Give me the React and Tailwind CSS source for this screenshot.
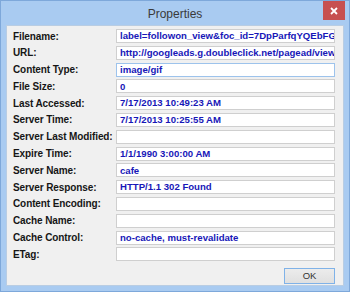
const rows = [
  { label: "Filename:", value: "label=followon_view&foc_id=7DpParfqYQEbFGt!Kz" },
  { label: "URL:", value: "http://googleads.g.doubleclick.net/pagead/viewthroughconversion" },
  { label: "Content Type:", value: "image/gif", focus: true },
  { label: "File Size:", value: "0" },
  { label: "Last Accessed:", value: "7/17/2013 10:49:23 AM" },
  { label: "Server Time:", value: "7/17/2013 10:25:55 AM" },
  { label: "Server Last Modified:", value: "" },
  { label: "Expire Time:", value: "1/1/1990 3:00:00 AM" },
  { label: "Server Name:", value: "cafe" },
  { label: "Server Response:", value: "HTTP/1.1 302 Found" },
  { label: "Content Encoding:", value: "" },
  { label: "Cache Name:", value: "" },
  { label: "Cache Control:", value: "no-cache, must-revalidate" },
  { label: "ETag:", value: "" },
];

export default function App() {
  return (
    <div
      className="w-[350px] h-[292px] bg-[#a9cbf1] border border-[#7ea8da] flex flex-col"
      style={{ fontFamily: '"Liberation Sans", Arial, sans-serif' }}
    >
      {/* Title bar */}
      <div className="relative h-[24px] flex items-center justify-center">
        <span className="text-[12px] text-[#3a3a3a] pt-[1px]">Properties</span>
        <div className="absolute right-[4px] top-0 w-[22px] h-[19px] bg-[#c75050] flex items-center justify-center">
          <svg width="8" height="8" viewBox="0 0 8 8">
            <path d="M1 1 L7 7 M7 1 L1 7" stroke="#ffffff" strokeWidth="1.8" />
          </svg>
        </div>
      </div>

      {/* Client area */}
      <div className="flex-1 mx-[5px] mb-[5px] bg-[#f0f0f0] border border-[#b9cde3] pt-[3px] pl-[6px] pr-[8px] flex flex-col">
        <div className="flex flex-col gap-[2.8px]">
          {rows.map((r) => (
            <div key={r.label} className="flex items-center h-[14px]">
              <div className="w-[103px] shrink-0 text-[10px] font-bold text-[#161616] whitespace-nowrap tracking-[-0.1px]">
                {r.label}
              </div>
              <div
                className={
                  "flex-1 min-w-0 h-[14px] bg-white border overflow-hidden flex items-center pl-[3px] " +
                  (r.focus ? "border-[#9dc3ec]" : "border-[#cfcfcf]")
                }
              >
                <span className="text-[9.6px] font-bold text-[#1717b8] whitespace-nowrap leading-none">
                  {r.value}
                </span>
              </div>
            </div>
          ))}
        </div>

        <div className="flex justify-end mt-[7px]">
          <div className="w-[51px] h-[16px] border border-[#7fb2e8] bg-gradient-to-b from-[#ececec] to-[#e0e0e0] flex items-center justify-center text-[9.5px] text-[#333]">
            OK
          </div>
        </div>
      </div>
    </div>
  );
}
